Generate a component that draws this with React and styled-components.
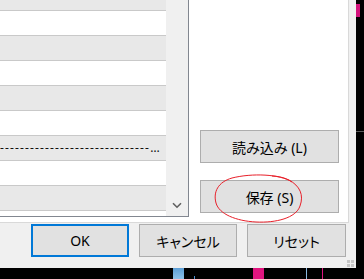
import styled, { createGlobalStyle } from "styled-components";

const GlobalStyle = createGlobalStyle`
  html, body {
    margin: 0;
    padding: 0;
    background: #000;
    overflow: hidden;
  }
  * { box-sizing: border-box; }
  body {
    font-family: "Noto Sans", "Noto Sans CJK JP", sans-serif;
  }
`;

const Desktop = styled.div`
  position: relative;
  width: 364px;
  height: 279px;
  background: #000;
  overflow: hidden;
`;

const Dialog = styled.div`
  position: relative;
  width: 356px;
  height: 268px;
  background: #f0f0f0;
  display: flex;
  flex-direction: column;
`;

const TabPage = styled.div`
  width: 349px;
  height: 223px;
  background: #fff;
  border-right: 1px solid #d9d9d9;
  border-bottom: 1px solid #d9d9d9;
  display: flex;
`;

const ListBox = styled.div`
  width: 189px;
  height: 217px;
  border-right: 1px solid #828790;
  border-bottom: 1px solid #828790;
  display: flex;
  overflow: hidden;
`;

const Rows = styled.div`
  width: 166px;
  margin-top: -14px;
  display: flex;
  flex-direction: column;
`;

const Row = styled.div`
  height: 25px;
  flex-shrink: 0;
  border-bottom: 1px solid #c9c9c9;
  background: ${(p) => (p.$alt ? "#e8e8e8" : "#fff")};
  padding-right: 6px;
  font-family: "Noto Sans", sans-serif;
  font-size: 12px;
  line-height: 24px;
  color: #111;
  white-space: nowrap;
  overflow: hidden;
  text-overflow: ellipsis;
  letter-spacing: ${(p) => (p.$dashes ? "1.14px" : "normal")};
`;

const ScrollBar = styled.div`
  width: 22px;
  background: #f0f0f0;
  display: flex;
  flex-direction: column;
  justify-content: flex-end;
`;

const ScrollButton = styled.div`
  height: 21px;
  display: flex;
  align-items: center;
  justify-content: center;
`;

const SidePanel = styled.div`
  flex: 1;
  display: flex;
  flex-direction: column;
  justify-content: flex-end;
  gap: 17px;
  padding: 0 9px 9px 11px;
`;

const Button = styled.button`
  width: ${(p) => p.$w}px;
  height: 33px;
  margin: 0;
  padding: 0;
  background: #e1e1e1;
  border: ${(p) => (p.$primary ? "2px solid #0078d7" : "1px solid #adadad")};
  font-family: "Noto Sans", "Noto Sans CJK JP", sans-serif;
  font-feature-settings: "palt";
  font-size: 14px;
  color: #000;
  display: flex;
  align-items: center;
  justify-content: center;
`;

const ButtonRow = styled.div`
  display: flex;
  gap: 10px;
  margin-top: 1px;
  padding-left: 31px;
`;

const Grip = styled.div`
  position: absolute;
  right: 2px;
  bottom: 1px;
  width: 7px;
  height: 7px;
  display: grid;
  grid-template-columns: 3px 3px;
  grid-template-rows: 3px 3px;
  gap: 1px;

  span {
    background: #c6c6c6;
  }
`;

const Bit = styled.div`
  position: absolute;
  background: ${(p) => p.$c};
`;

const Annotation = styled.svg`
  position: absolute;
  left: 0;
  top: 0;
  pointer-events: none;
`;

const rows = Array.from({ length: 10 }, (_, i) => i);

export default function App() {
  return (
    <Desktop>
      <GlobalStyle />
      <Dialog>
        <TabPage>
          <ListBox>
            <Rows>
              {rows.map((i) => (
                <Row key={i} $alt={i % 2 === 0} $dashes={i === 6}>
                  {i === 6 ? "-".repeat(48) : ""}
                </Row>
              ))}
            </Rows>
            <ScrollBar>
              <ScrollButton>
                <svg width="10" height="7" viewBox="0 0 10 7">
                  <path d="M1 1.2 L5 5.2 L9 1.2" fill="none" stroke="#606060" strokeWidth="1.6" />
                </svg>
              </ScrollButton>
            </ScrollBar>
          </ListBox>
          <SidePanel>
            <Button $w={139}>読み込み (L)</Button>
            <Button $w={139}>保存 (S)</Button>
          </SidePanel>
        </TabPage>
        <ButtonRow>
          <Button $w={98} $primary>OK</Button>
          <Button $w={98}>キャンセル</Button>
          <Button $w={99}>リセット</Button>
        </ButtonRow>
        <Grip>
          <span />
          <span />
          <span />
          <span />
        </Grip>
      </Dialog>

      <Bit $c="#d4127c" style={{ left: 356, top: 4, width: 4, height: 13 }} />
      <Bit $c="#5a5a5a" style={{ left: 356, top: 131, width: 8, height: 1 }} />
      <Bit $c="linear-gradient(#5d9fd6, #8ec2ea)" style={{ left: 173, top: 268, width: 11, height: 11 }} />
      <Bit $c="#4a90d0" style={{ left: 194, top: 276, width: 1, height: 3 }} />
      <Bit $c="#e0157f" style={{ left: 253, top: 268, width: 11, height: 11 }} />
      <Bit $c="#8ab8e0" style={{ left: 306, top: 268, width: 1, height: 11 }} />
      <Bit $c="#e0157f" style={{ left: 322, top: 268, width: 1, height: 11 }} />

      <Annotation width="364" height="279" viewBox="0 0 364 279">
        <path
          d="M292 182 C280 174 252 173 232 178 C218 182 213 192 216 203 C219 214 236 221 256 222 C276 223 296 218 300 206 C304 195 300 186 289 180 C283 177 276 176 272 176"
          fill="none"
          stroke="#e8202a"
          strokeWidth="1"
        />
      </Annotation>
    </Desktop>
  );
}
